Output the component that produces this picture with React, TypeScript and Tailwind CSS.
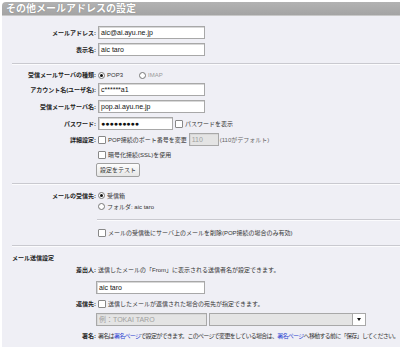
import React from "react";

const font = { fontFamily: '"Liberation Sans", "Noto Sans CJK JP", sans-serif' };

function Label({ children, w = "w-[96px]" }: { children: React.ReactNode; w?: string }) {
  return (
    <div className={`${w} shrink-0 text-right pr-[2px] font-bold text-[6px] text-[#222] leading-none`}>
      {children}
    </div>
  );
}

function TextInput({ value, w = "w-[107px]", disabled = false }: { value: string; w?: string; disabled?: boolean }) {
  return (
    <div
      className={`${w} h-[13px] border border-[#a8a8a8] ${
        disabled ? "bg-[#e4e4e4] text-[#a0a0a0]" : "bg-white text-[#111]"
      } text-[7px] leading-[11px] pl-[2px] shadow-[inset_1px_1px_0_#d8d8d8] overflow-hidden whitespace-nowrap`}
    >
      {value}
    </div>
  );
}

function Check() {
  return <div className="w-[8px] h-[8px] border border-[#888] bg-white shrink-0 rounded-[1px]" />;
}

function Radio({ on }: { on?: boolean }) {
  return (
    <div className="w-[7px] h-[7px] rounded-full border border-[#777] bg-white shrink-0 flex items-center justify-center">
      {on && <div className="w-[3px] h-[3px] rounded-full bg-[#111]" />}
    </div>
  );
}

function Divider({ left = "ml-[10px]" }: { left?: string }) {
  return (
    <div className={`${left}`}>
      <div className="h-[1px] bg-[#c9c9cf]" />
      <div className="h-[1px] bg-[#fbfbfd]" />
    </div>
  );
}

const small = "text-[6px] text-[#333] leading-none whitespace-nowrap";

export default function App() {
  return (
    <div className="w-[400px] h-[353px] bg-white pl-[2px] pt-[2px] overflow-hidden" style={font}>
      <div className="h-[14px] rounded-tl-[4px] bg-gradient-to-b from-[#b2b2b2] to-[#a4a4a4] border-b border-[#c8c8c8] flex items-center pl-[4px]">
        <span className="text-white font-bold text-[10px] leading-none [text-shadow:0_0_1px_#777]">
          その他メールアドレスの設定
        </span>
      </div>
      <div className="h-[331px] bg-[#efeff5] pt-[10px]">
        <div className="flex items-center h-[13px]">
          <Label>メールアドレス:</Label>
          <TextInput value="aic@ai.ayu.ne.jp" />
        </div>
        <div className="flex items-center h-[13px] mt-[4px]">
          <Label>表示名:</Label>
          <TextInput value="aic taro" />
        </div>
        <div className="mt-[7px]">
          <Divider />
        </div>
        <div className="flex items-center h-[12px] mt-[4px]">
          <Label>受信メールサーバの種類:</Label>
          <div className="flex items-center gap-[2px]">
            <Radio on />
            <span className={small}>POP3</span>
          </div>
          <div className="flex items-center gap-[2px] ml-[16px]">
            <Radio />
            <span className={`${small} text-[#999]`}>IMAP</span>
          </div>
        </div>
        <div className="flex items-center h-[13px] mt-[2px]">
          <Label>アカウント名(ユーザ名):</Label>
          <TextInput value="c******a1" />
        </div>
        <div className="flex items-center h-[13px] mt-[4px]">
          <Label>受信メールサーバ名:</Label>
          <TextInput value="pop.ai.ayu.ne.jp" />
        </div>
        <div className="flex items-center h-[13px] mt-[4px]">
          <Label>パスワード:</Label>
          <TextInput value="●●●●●●●●●" w="w-[75px]" />
          <div className="ml-[2px] flex items-center gap-[2px]">
            <Check />
            <span className={small}>パスワードを表示</span>
          </div>
        </div>
        <div className="flex items-center h-[13px] mt-[3px]">
          <Label>詳細設定:</Label>
          <div className="flex items-center gap-[2px]">
            <Check />
            <span className={small}>POP接続のポート番号を変更</span>
          </div>
          <div className="ml-[2px]">
            <TextInput value="110" w="w-[30px]" disabled />
          </div>
          <span className={`${small} text-[#666] ml-[1px]`}>(110がデフォルト)</span>
        </div>
        <div className="flex items-center h-[12px] mt-[3px]">
          <div className="w-[96px] shrink-0" />
          <div className="flex items-center gap-[2px]">
            <Check />
            <span className={small}>暗号化接続(SSL)を使用</span>
          </div>
        </div>
        <div className="flex items-center h-[14px] mt-[2px]">
          <div className="w-[94px] shrink-0" />
          <div className="h-[14px] px-[3px] border border-[#a0a0a0] rounded-[2px] bg-gradient-to-b from-[#fdfdfd] to-[#e6e6e6] flex items-center">
            <span className={small}>設定をテスト</span>
          </div>
        </div>
        <div className="mt-[6px]">
          <Divider />
        </div>
        <div className="flex items-center h-[11px] mt-[5px]">
          <Label>メールの受信先:</Label>
          <div className="flex items-center gap-[2px]">
            <Radio on />
            <span className={small}>受信箱</span>
          </div>
        </div>
        <div className="flex items-center h-[11px]">
          <div className="w-[96px] shrink-0" />
          <div className="flex items-center gap-[2px]">
            <Radio />
            <span className={small}>フォルダ: aic taro</span>
          </div>
        </div>
        <div className="mt-[7px]">
          <Divider left="ml-[95px]" />
        </div>
        <div className="flex items-center h-[12px] mt-[6px]">
          <div className="w-[96px] shrink-0" />
          <div className="flex items-center gap-[2px]">
            <Check />
            <span className={small}>メールの受信後にサーバ上のメールを削除(POP接続の場合のみ有効)</span>
          </div>
        </div>
        <div className="mt-[6px]">
          <Divider />
        </div>
        <div className="flex items-center h-[12px] mt-[5px] pl-[10px]">
          <span className="font-bold text-[6px] text-[#222] leading-none">メール送信設定</span>
        </div>
        <div className="flex items-center h-[12px]">
          <Label>差出人:</Label>
          <span className={small}>送信したメールの「From」に表示される送信者名が設定できます。</span>
        </div>
        <div className="flex items-center h-[13px] mt-[5px]">
          <div className="w-[94px] shrink-0" />
          <TextInput value="aic taro" w="w-[109px]" />
        </div>
        <div className="flex items-center h-[12px] mt-[4px]">
          <Label>返信先:</Label>
          <div className="flex items-center gap-[2px]">
            <Check />
            <span className={small}>送信したメールが返信された場合の宛先が指定できます。</span>
          </div>
        </div>
        <div className="flex items-center h-[13px] mt-[3px]">
          <div className="w-[94px] shrink-0" />
          <TextInput value="例：TOKAI TARO" w="w-[111px]" disabled />
          <div className="ml-[2px] w-[157px] h-[13px] border border-[#a8a8a8] bg-[#e4e4e4] flex justify-end">
            <div className="w-[13px] h-full bg-white border-l border-[#a8a8a8] flex items-center justify-center">
              <div className="w-0 h-0 border-l-[2.5px] border-r-[2.5px] border-t-[3px] border-l-transparent border-r-transparent border-t-[#111]" />
            </div>
          </div>
        </div>
        <div className="flex items-center h-[12px] mt-[4px]">
          <Label>署名:</Label>
          <span className={`${small} tracking-[-0.7px]`}>
            署名は<span className="text-[#2b3fd0]">署名ページ</span>で設定ができます。このページで変更をしている場合は、<span className="text-[#2b3fd0]">署名ページ</span>へ移動する前に「保存」してください。
          </span>
        </div>
      </div>
    </div>
  );
}
